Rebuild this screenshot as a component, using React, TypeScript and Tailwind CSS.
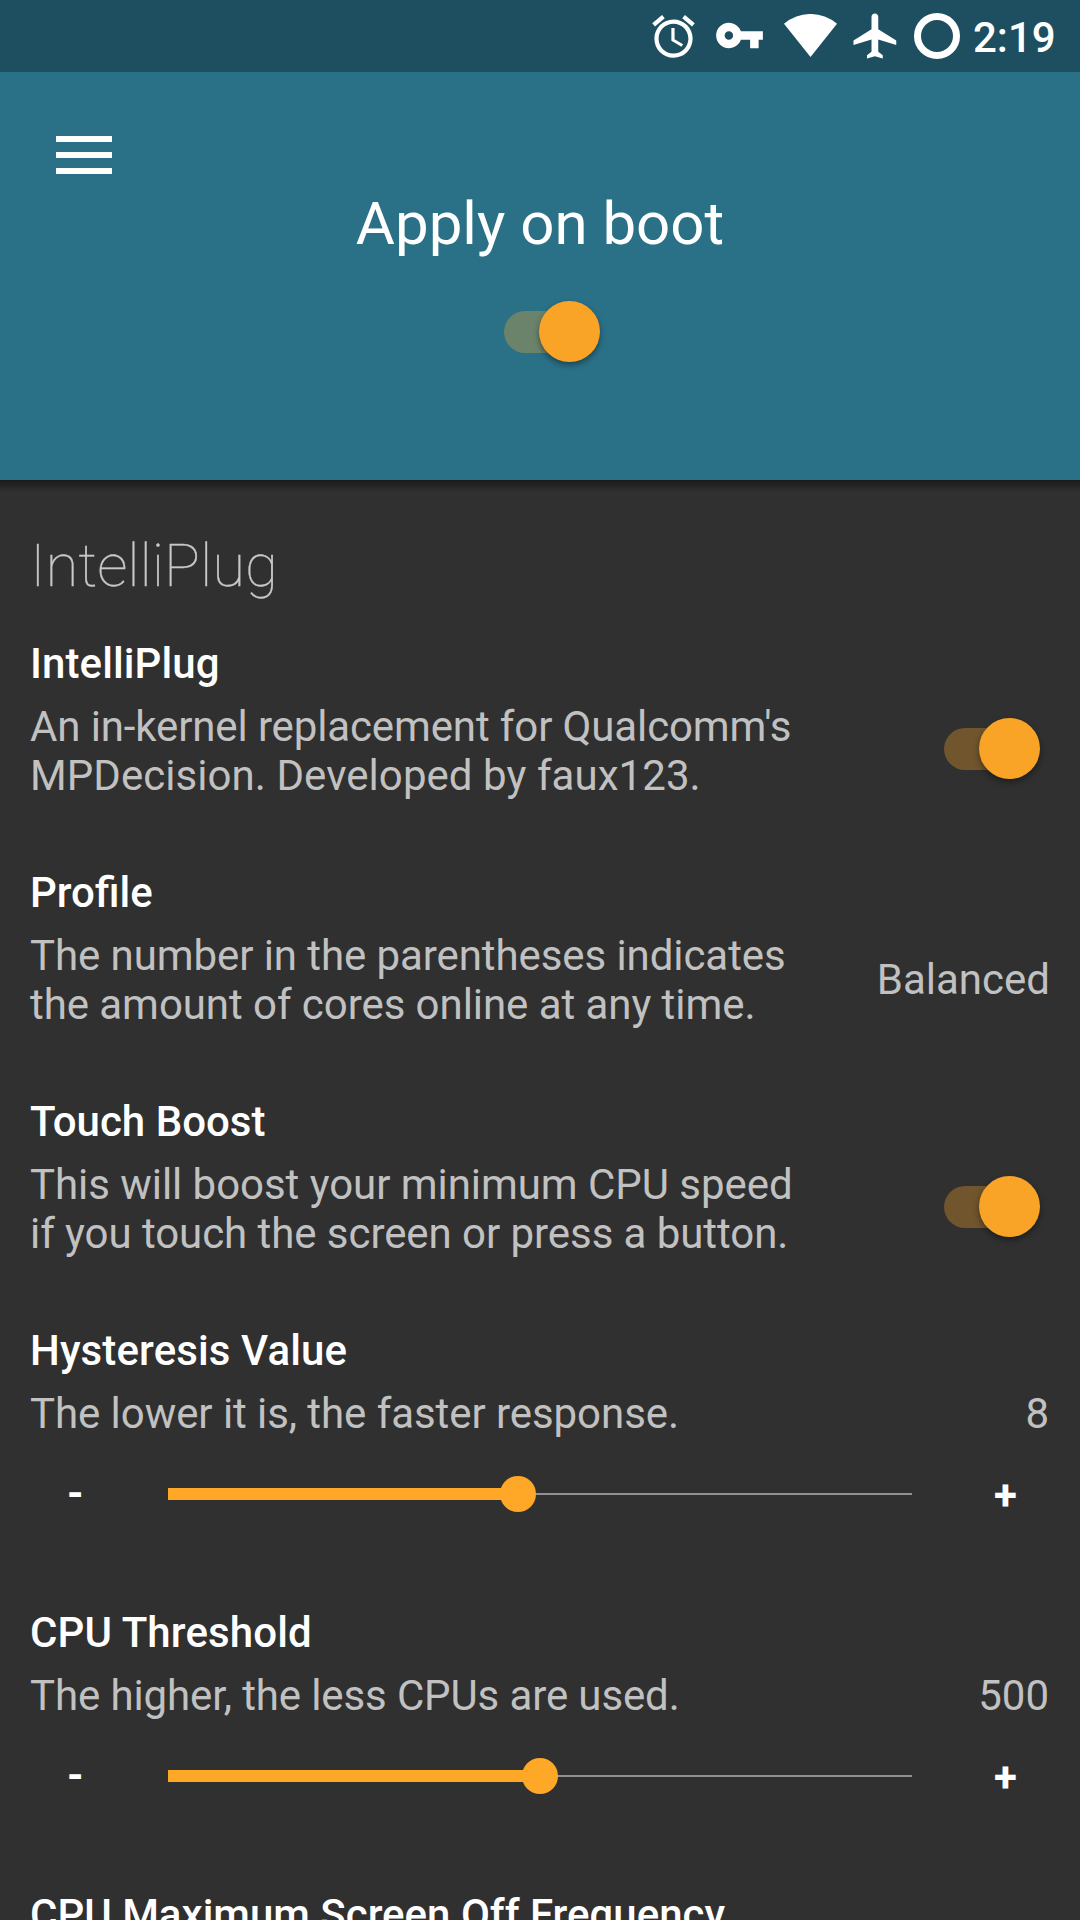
import React from "react";

function Toggle({ header = false }: { header?: boolean }) {
  return (
    <div className="relative h-[60px] w-[96px] shrink-0">
      <div className={"absolute left-0 top-[10px] h-[42px] w-[84px] rounded-full " + (header ? "bg-[#6b836b]" : "bg-[#70552d]")} />
      <div className="absolute left-[35.3px] top-[0.2px] h-[60.4px] w-[60.4px] rounded-full bg-[#f9a426] shadow-[0_3px_6px_rgba(0,0,0,0.4)]" />
    </div>
  );
}

function Heading({ children, tracking = "" }: { children: React.ReactNode; tracking?: string }) {
  return <h2 className={"whitespace-nowrap text-[42px] font-medium leading-[49px] text-white " + tracking}>{children}</h2>;
}

type Line = { text: string; tracking: string };

function Row({ title, titleTracking, lines, children }: { title: string; titleTracking?: string; lines: Line[]; children: React.ReactNode }) {
  return (
    <section className="flex h-[229px] justify-between pl-[30px]">
      <div>
        <Heading tracking={titleTracking}>{title}</Heading>
        <p className="mt-[14px] whitespace-nowrap text-[42px] leading-[49px] text-[#c1c1c1]">
          {lines.map((line) => (
            <span key={line.text} className={"block " + line.tracking}>{line.text}</span>
          ))}
        </p>
      </div>
      {children}
    </section>
  );
}

function SliderRow({ title, text, tracking, value, position }: { title: string; text: string; tracking: string; value: string; position: number }) {
  return (
    <section className="h-[282px]">
      <div className="pl-[30px] pr-[31px]">
        <Heading tracking="tracking-[0.12px]">{title}</Heading>
        <div className="mt-[14px] flex justify-between whitespace-nowrap text-[42px] leading-[49px] text-[#c1c1c1]">
          <span className={tracking}>{text}</span><span>{value}</span>
        </div>
      </div>
      <div className="mt-[38px] flex h-[36px] items-center text-[42px] font-bold leading-[49px] text-white">
        <span className="w-[168px] pb-[2px] pl-[67px]">-</span>
        <div className="relative flex h-[36px] w-[744px] items-center">
          <div className="h-[2px] w-full bg-[#919191]" />
          <div className="absolute left-0 top-[12px] h-[12px] bg-[#ffa726]" style={{ width: position }} />
          <div className="absolute top-0 h-[36px] w-[36px] -translate-x-1/2 rounded-full bg-[#ffa726]" style={{ left: position }} />
        </div>
        <span className="pl-[82px] pt-[3px]">+</span>
      </div>
    </section>
  );
}

export default function App() {
  return (
    <main className="h-[1920px] w-[1080px] overflow-hidden bg-[#303030] font-['Roboto',sans-serif]">
      <div className="flex h-[72px] justify-end bg-[#1e4f60] pr-[24px] text-white">
        <svg className="mr-[15px] mt-[11px] shrink-0" width="51" height="51" viewBox="0 0 24 24" fill="currentColor"><path d="M22 5.72l-4.6-3.86-1.29 1.53 4.6 3.86L22 5.72zM7.88 3.39L6.6 1.86 2 5.71l1.29 1.53 4.59-3.85zM12.5 8H11v6l4.75 2.85.75-1.23-4-2.37V8zM12 4c-4.97 0-9 4.03-9 9s4.02 9 9 9a9 9 0 0 0 0-18zm0 16c-3.87 0-7-3.13-7-7s3.13-7 7-7 7 3.13 7 7-3.13 7-7 7z"/></svg>
        <svg className="mr-[19px] mt-[10px] shrink-0" width="51" height="51" viewBox="0 0 24 24" fill="currentColor"><path d="M12.65 10C11.83 7.67 9.61 6 7 6c-3.31 0-6 2.69-6 6s2.69 6 6 6c2.61 0 4.83-1.67 5.65-4H17v4h4v-4h2v-4H12.65zM7 14c-1.1 0-2-.9-2-2s.9-2 2-2 2 .9 2 2-.9 2-2 2z"/></svg>
        <svg className="mr-[12px] mt-[14px] shrink-0" width="53" height="43" viewBox="0 0 53 43" fill="currentColor"><path d="M0 9.7A41 41 0 0 1 53 9.7L26.5 43Z"/></svg>
        <svg className="mr-[11px] mt-[9px] shrink-0" width="54" height="54" viewBox="0 0 24 24" fill="currentColor"><path d="M21 16v-2l-8-5V3.5c0-.83-.67-1.5-1.5-1.5S10 2.67 10 3.5V9l-8 5v2l8-2.5V19l-2 1.5V22l3.5-1 3.5 1v-1.5L13 19v-5.5l8 2.5z"/></svg>
        <div className="mt-[13px] h-[46px] w-[46px] shrink-0 rounded-full border-[7px] border-white" />
        <span className="w-[96px] whitespace-nowrap pl-[13px] pt-[13px] text-[42px] font-medium leading-[49px]">2:19</span>
      </div>
      <header className="relative flex h-[408px] flex-col bg-[#2a7188]">
        <div className="ml-[56px] mt-[64px] flex h-[38px] w-[56px] flex-col justify-between">
          <i className="h-[6px] bg-white" /><i className="h-[6px] bg-white" /><i className="h-[6px] bg-white" />
        </div>
        <h1 className="mt-[15px] text-center text-[60px] leading-[70px] text-white">Apply on boot</h1>
        <div className="ml-[504px] mt-[42px]"><Toggle header /></div>
        <div className="absolute left-0 top-full h-[12px] w-full bg-linear-to-b from-[#1b1b1b] to-[#303030]" />
      </header>
      <div className="pt-[51px]">
        <h2 className="h-[108px] pl-[30px] text-[60px] font-thin leading-[70px] tracking-[-0.1px] text-[#c8c8c8] [-webkit-text-stroke:0.3px_#c8c8c8]">IntelliPlug</h2>
        <Row title="IntelliPlug" titleTracking="tracking-[0.1px]" lines={[
          { text: "An in-kernel replacement for Qualcomm's", tracking: "tracking-[-0.125px]" },
          { text: "MPDecision. Developed by faux123.", tracking: "tracking-[0.06px]" },
        ]}><div className="mr-[40px] mt-[79px]"><Toggle /></div></Row>
        <Row title="Profile" lines={[
          { text: "The number in the parentheses indicates", tracking: "tracking-[-0.08px]" },
          { text: "the amount of cores online at any time.", tracking: "tracking-[-0.06px]" },
        ]}><span className="mr-[30px] mt-[87px] text-[42px] leading-[49px] text-[#c1c1c1]">Balanced</span></Row>
        <Row title="Touch Boost" lines={[
          { text: "This will boost your minimum CPU speed", tracking: "tracking-[-0.05px]" },
          { text: "if you touch the screen or press a button.", tracking: "tracking-[-0.06px]" },
        ]}><div className="mr-[40px] mt-[79px]"><Toggle /></div></Row>
        <SliderRow title="Hysteresis Value" text="The lower it is, the faster response." tracking="tracking-[-0.065px]" value="8" position={350} />
        <SliderRow title="CPU Threshold" text="The higher, the less CPUs are used." tracking="tracking-[-0.12px]" value="500" position={372} />
        <div className="pl-[30px]"><Heading>CPU Maximum Screen Off Frequency</Heading></div>
      </div>
    </main>
  );
}
